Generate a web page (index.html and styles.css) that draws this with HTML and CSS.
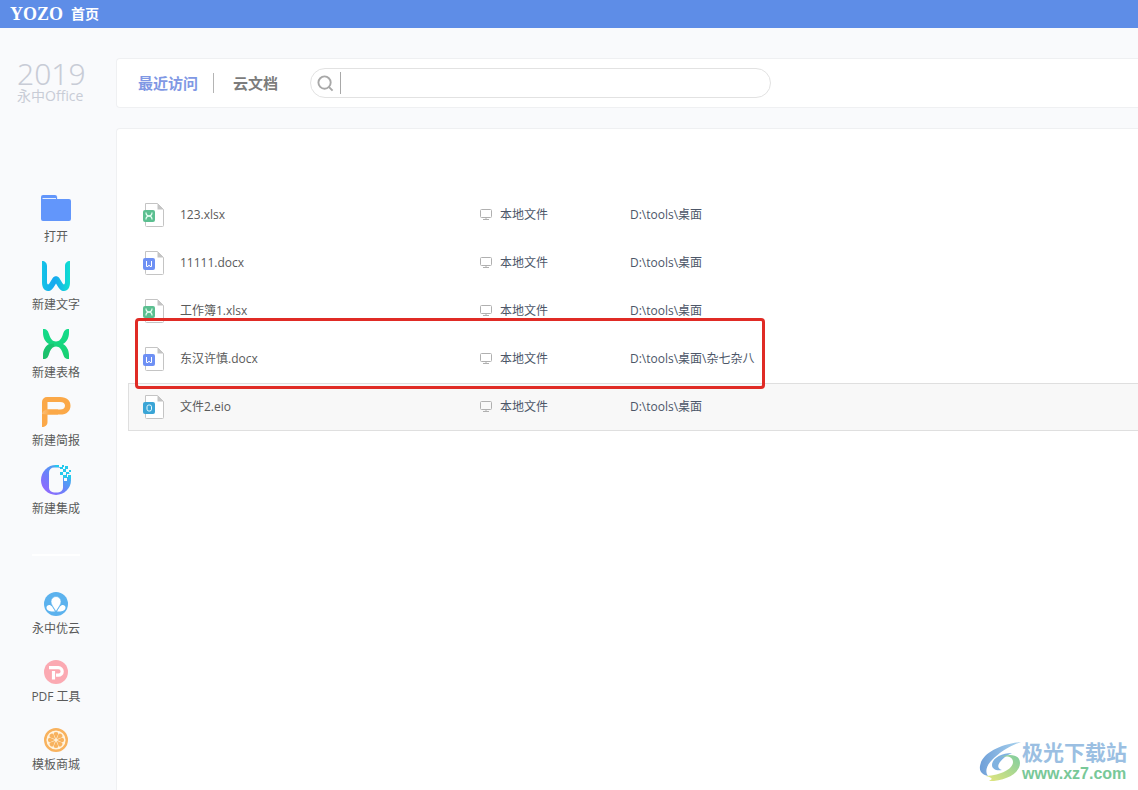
FILE: index.html
```
<!DOCTYPE html>
<html lang="zh-CN">
<head>
<meta charset="utf-8">
<meta name="viewport" content="width=device-width, initial-scale=1">
<title>YOZO 首页</title>
<link rel="stylesheet" href="styles.css">
</head>
<body>
<svg class="defs" aria-hidden="true">
  <defs>
    <linearGradient id="gw" x1="0" y1="0" x2="1" y2="0"><stop offset="0" stop-color="#14c4e6"/><stop offset=".45" stop-color="#18a8f0"/><stop offset="1" stop-color="#10e0d0"/></linearGradient>
    <linearGradient id="gx" x1="0" y1="0" x2="0" y2="1"><stop offset="0" stop-color="#14dc8c"/><stop offset="1" stop-color="#18d070"/></linearGradient>
    <linearGradient id="go" x1="0" y1="1" x2="1" y2="0"><stop offset="0" stop-color="#a060ff"/><stop offset=".45" stop-color="#6c80fa"/><stop offset="1" stop-color="#20d0e8"/></linearGradient>
    <linearGradient id="gp" x1="0" y1="0" x2="1" y2="0"><stop offset="0" stop-color="#fcc078"/><stop offset=".5" stop-color="#fba848"/></linearGradient>
    <linearGradient id="gs" x1="0" y1="0" x2="1" y2="0"><stop offset="0" stop-color="#6f9fd8"/><stop offset="1" stop-color="#a9d3ee"/></linearGradient>
    <linearGradient id="gg" x1="0" y1="1" x2="1" y2="0"><stop offset="0" stop-color="#e5e67c"/><stop offset="1" stop-color="#7fcda0"/></linearGradient>
    <symbol id="page" viewBox="0 0 22 24">
      <path d="M2.500.5H14.500l6 6V22.500a1 1 0 0 1-1 1h-16a1 1 0 0 1-1-1z" fill="#fff" stroke="#c4c4c4"/>
      <path d="M14.500.5V6.500h6z" fill="#c4c4c4"/>
    </symbol>
    <symbol id="file-x" viewBox="0 0 22 24">
      <use href="#page"/><rect y="7" width="12" height="12" rx="2" fill="#5bbf90"/>
      <path d="M3 9.500c0 4.500 6 4.500 6 0M3 16.500c0-4.500 6-4.500 6 0" fill="none" stroke="#e8fff4" stroke-width="1.200"/>
    </symbol>
    <symbol id="file-w" viewBox="0 0 22 24">
      <use href="#page"/><rect y="7" width="12" height="12" rx="2" fill="#6e90f4"/>
      <path d="M3.500 10v5.500h1.500l1-1.500 1 1.500h1.500V10" fill="none" stroke="#fff"/>
    </symbol>
    <symbol id="file-o" viewBox="0 0 22 24">
      <use href="#page"/><rect y="7" width="12" height="12" rx="2" fill="#3aa5d6"/>
      <rect x="4" y="10" width="4.500" height="6" rx="1.800" fill="none" stroke="#e8faff"/>
    </symbol>
    <symbol id="monitor" viewBox="0 0 12 12">
      <path d="M1.500.5h9a1 1 0 0 1 1 1v6a1 1 0 0 1-1 1h-9a1 1 0 0 1-1-1v-6a1 1 0 0 1 1-1zM6 8.500v2M3 10.500h6" fill="none" stroke="#b0b0b0"/>
    </symbol>
  </defs>
</svg>

<header class="titlebar">
  <span class="brand">YOZO</span>
  <span class="home">首页</span>
</header>

<div class="layout">
  <aside class="sidebar">
    <div class="product">
      <span class="year">2019</span>
      <span class="suite">永中Office</span>
    </div>
    <nav class="create">
      <button class="action" type="button">
        <svg class="icon" viewBox="0 0 36 36"><path d="M3 7a2 2 0 0 1 2-2h12a2 2 0 0 1 2 2v2h12a2 2 0 0 1 2 2v18a2 2 0 0 1-2 2H5a2 2 0 0 1-2-2z" fill="#6296fb"/><path d="M4.500 8.500h13.500M19.500 6.500v2.500" stroke="#e4eeff" fill="none"/></svg>
        <span>打开</span>
      </button>
      <button class="action" type="button">
        <svg class="icon" viewBox="0 0 36 36"><path d="M4 3c3 0 5 2 5 5v16c0 3 1.500 3 2.500 1.300l3.200-5.300c1.500-2.400 5.100-2.400 6.600 0l3.200 5.300C25.500 27 27 27 27 24V8c0-3 2-5 5-5v21.500c0 4.500-2 8.500-6 8.500-3 0-4.500-1.500-8-7.500-3.500 6-5 7.500-8 7.500-4 0-6-4-6-8.500z" fill="url(#gw)"/></svg>
        <span>新建文字</span>
      </button>
      <button class="action" type="button">
        <svg class="icon" viewBox="0 0 36 36"><path d="M5 3c4 0 5 2 6 5 1.500 4.800 3.500 7.500 7 7.500s5.500-2.700 7-7.500c1-3 2-5 6-5v4c0 5-2.500 9-6 11 3.500 2 6 6 6 11v4c-4 0-5-2-6-5-1.500-4.800-3.500-7.500-7-7.500s-5.500 2.700-7 7.500c-1 3-2 5-6 5v-4c0-5 2.500-9 6-11-3.500-2-6-6-6-11z" fill="url(#gx)"/><path d="M5 33v-4c0-4 2-8 5-10 2-1 4-1.500 6-1.500v3.500c-2.300.7-3.700 2.700-5 7-1 3-2 5-6 5z" fill="#20a860" opacity=".4"/></svg>
        <span>新建表格</span>
      </button>
      <button class="action" type="button">
        <svg class="icon" viewBox="0 0 36 36"><path d="M4 8a5 5 0 0 1 5-5h13c7 0 10.500 3.500 10.500 8.700S29 20.500 22 20.500H9.500V28c0 3.500-2.500 5-5.500 5z" fill="#fba848"/><path d="M9.500 8H22c3.500 0 5 1.500 5 3.800s-1.500 3.700-5 3.700H9.500z" fill="#f9fafc"/><path d="M4 20q1-4.500 6-4.500h10v5H9.500z" fill="url(#gp)"/></svg>
        <span>新建简报</span>
      </button>
      <button class="action" type="button">
        <svg class="icon" viewBox="0 0 36 36"><circle cx="18" cy="18" r="15" fill="url(#go)"/><rect x="11" y="5.500" width="14" height="25" rx="5" fill="#f9fafc"/><path d="M21 2h3v3h-3zM25 4h3v3h-3zM28 7h3v3h-3zM22 7h3v3h-3zM25 10h3v3h-3zM29 12h3v3h-3zM26 16h3v3h-3z" fill="#f9fafc"/><path d="M17 3h4v2h-4zM24 3h2v2h-2zM27 4h3v3h-3zM22 5h3v2h-3zM25 7h3v3h-3zM22 10h3v3h-3zM28 10h3v2h-3zM31 8h2v2h-2zM25 13h4v3h-4zM30 13h3v4h-3z" fill="#25c9ed"/></svg>
        <span>新建集成</span>
      </button>
    </nav>
    <hr class="divider">
    <nav class="services">
      <button class="action service" type="button">
        <svg class="icon" viewBox="0 0 24 24"><circle cx="12" cy="12" r="12" fill="#5cb2ee"/><path d="M11 19.500c-5 .5-8.500-1-8.500-4s4-3.500 5.500-1c1 1.500 2 3 3 5zM13 19.500c5 .5 8.500-1 8.500-4s-4-3.500-5.500-1c-1 1.500-2 3-3 5z" fill="#fff"/><path d="M12 19.500C9 14.500 7 12.500 7 9.500a5 5 0 0 1 10 0c0 3-2 5-5 10z" fill="#fff" stroke="#5cb2ee" stroke-width=".6"/></svg>
        <span>永中优云</span>
      </button>
      <button class="action service" type="button">
        <svg class="icon" viewBox="0 0 24 24"><circle cx="12" cy="12" r="12" fill="#fba9b2"/><path d="M5 7.700h9.500a3.700 3.700 0 0 1 0 7.400H12M9.500 11v8.500" fill="none" stroke="#fff" stroke-width="3.200"/></svg>
        <span>PDF 工具</span>
      </button>
      <button class="action service" type="button">
        <svg class="icon" viewBox="0 0 24 24"><circle cx="12" cy="12" r="10.800" fill="#fff3df" stroke="#f8b25e" stroke-width="2.400"/><g fill="#f8b25e"><path id="seg" d="M12 11 9.800 6.200C9.500 4.800 10.500 4 12 4s2.500.8 2.200 2.200z"/><use href="#seg" transform="rotate(45 12 12)"/><use href="#seg" transform="rotate(90 12 12)"/><use href="#seg" transform="rotate(135 12 12)"/><use href="#seg" transform="rotate(180 12 12)"/><use href="#seg" transform="rotate(225 12 12)"/><use href="#seg" transform="rotate(270 12 12)"/><use href="#seg" transform="rotate(315 12 12)"/></g></svg>
        <span>模板商城</span>
      </button>
    </nav>
  </aside>

  <main class="main">
    <div class="toolbar">
      <button class="tab active" type="button">最近访问</button>
      <button class="tab" type="button">云文档</button>
      <label class="search">
        <svg class="search-icon" viewBox="0 0 18 18"><circle cx="8" cy="8" r="6.500"/><path d="M12.500 12.500l4 4"/></svg>
        <input class="search-input" type="search" aria-label="搜索">
      </label>
    </div>

    <section class="panel">
      <table class="files">
        <tbody>
          <tr><td class="type"><svg class="file-icon"><use href="#file-x"/></svg></td><td class="name">123.xlsx</td><td class="place"><span class="source"><svg class="monitor"><use href="#monitor"/></svg>本地文件</span></td><td>D:\tools\桌面</td></tr>
          <tr><td class="type"><svg class="file-icon"><use href="#file-w"/></svg></td><td class="name">11111.docx</td><td class="place"><span class="source"><svg class="monitor"><use href="#monitor"/></svg>本地文件</span></td><td>D:\tools\桌面</td></tr>
          <tr><td class="type"><svg class="file-icon"><use href="#file-x"/></svg></td><td class="name">工作簿1.xlsx</td><td class="place"><span class="source"><svg class="monitor"><use href="#monitor"/></svg>本地文件</span></td><td>D:\tools\桌面</td></tr>
          <tr><td class="type"><svg class="file-icon"><use href="#file-w"/></svg></td><td class="name">东汉许慎.docx</td><td class="place"><span class="source"><svg class="monitor"><use href="#monitor"/></svg>本地文件</span></td><td>D:\tools\桌面\杂七杂八</td></tr>
          <tr class="selected"><td class="type"><svg class="file-icon"><use href="#file-o"/></svg></td><td class="name">文件2.eio</td><td class="place"><span class="source"><svg class="monitor"><use href="#monitor"/></svg>本地文件</span></td><td>D:\tools\桌面</td></tr>
        </tbody>
      </table>
      <div class="highlight"></div>
    </section>
  </main>
</div>

<div class="watermark">
  <svg class="swirl" viewBox="0 0 42 42"><path d="M42 1C22 3 3 12 1 25c-1 6 3 9 8 10-3-4-2-10 4-16C20 12 30 5 42 1z" fill="url(#gs)"/><path d="M33 12c-10 0-20 5-20 12 0 4 4 6 10 5-4-1-5-4-2-8 3-4 7-7 12-9z" fill="#7fb2e0"/><path d="M20 17c8-3 14-1 14 4 0 7-12 13-27 14 7 2 7 3 3 5 17 0 31-8 31-18 0-9-12-10-21-5z" fill="url(#gg)"/></svg>
  <div class="mark-text"><span class="mark-name">极光下载站</span><span class="mark-url">www.xz7.com</span></div>
</div>
</body>
</html>
```
FILE: styles.css
```
* { box-sizing: border-box; }

body {
  margin: 0;
  min-height: 100vh;
  display: flex;
  flex-direction: column;
  position: relative;
  background: #f9fafc;
  color: #5a5a5a;
  font: 12px/20px "Open Sans", "Noto Sans CJK SC", sans-serif;
}

button { font: inherit; color: inherit; border: 0; padding: 0; background: none; cursor: pointer; }

.defs { position: absolute; width: 0; height: 0; }

.titlebar {
  display: flex;
  align-items: center;
  gap: 8px;
  height: 28px;
  padding: 0 10px;
  background: #5e8de7;
  color: #fff;
}
.brand { font: bold 18px/28px "Liberation Serif", serif; }
.home { font-size: 14px; font-weight: bold; }

.layout { flex: 1; display: grid; grid-template-columns: 116px 1fr; }

.sidebar { display: flex; flex-direction: column; padding: 30px 0 14px; }
.product { display: flex; flex-direction: column; padding-left: 17px; color: #c8ccd6; }
.year { font: 30px/32px "Noto Sans", sans-serif; font-weight: 300; }
.suite { font-size: 14px; line-height: 12px; }

.create { display: flex; flex-direction: column; gap: 10px; margin-top: 88px; }
.action { display: flex; flex-direction: column; align-items: center; width: 112px; line-height: 22px; }
.icon { width: 36px; height: 36px; }
.divider { width: 48px; height: 2px; margin: 34px 0 36px 32px; border: 0; background: #fff; }
.services { display: flex; flex-direction: column; gap: 20px; }
.service { gap: 2px; }
.service .icon { width: 24px; height: 24px; }

.main { display: flex; flex-direction: column; gap: 20px; padding-top: 30px; min-width: 0; }
.toolbar {
  display: flex;
  align-items: center;
  height: 50px;
  padding-left: 21px;
  background: #fff;
  border: 1px solid #eff0f2;
  border-right: 0;
  border-radius: 4px 0 0 4px;
}
.tab { font-size: 15px; font-weight: bold; color: #7c7c7c; white-space: nowrap; }
.tab.active { color: #7f98e4; padding-right: 15px; margin-right: 19px; border-right: 1px solid #b4b4b4; }
.search {
  display: flex;
  align-items: center;
  flex: 0 1 461px;
  height: 30px;
  margin-left: 32px;
  padding-left: 6px;
  border: 1px solid #e2e2e2;
  border-radius: 15px;
}
.search-icon { width: 17px; height: 17px; fill: none; stroke: #a8a8a8; stroke-width: 2; }
.search-input {
  flex: 1;
  min-width: 0;
  height: 22px;
  margin: 0 14px 0 6px;
  padding: 0 6px;
  border: 0;
  border-left: 1px solid #a8a8a8;
  outline: 0;
  background: none;
  font: inherit;
  appearance: none;
}

.panel {
  flex: 1;
  position: relative;
  padding: 62px 0 0 11px;
  background: #fff;
  border: 1px solid #eff0f2;
  border-width: 1px 0 0 1px;
  border-radius: 4px 0 0 0;
}
.files { width: 100%; border-collapse: separate; border-spacing: 0; table-layout: fixed; }
.files td { height: 48px; padding: 0; white-space: nowrap; color: #4c5668; }
.files .type { width: 52px; padding-left: 15px; }
.files .name { width: 300px; color: #5a5a5a; }
.files .place { width: 150px; }
.source { display: flex; align-items: center; gap: 8px; }
.file-icon { display: block; width: 22px; height: 24px; }
.monitor { width: 12px; height: 12px; }
.selected td { background: #f8f8f8; border: 1px solid #dfdfdf; border-width: 1px 0; }
.selected .type { border-left-width: 1px; padding-left: 14px; }

.highlight {
  position: absolute;
  left: 18px;
  top: 189px;
  width: 630px;
  height: 71px;
  border: 3px solid #e02b25;
  border-radius: 4px;
}

.watermark { position: absolute; right: 11px; bottom: 6px; display: flex; align-items: center; gap: 1px; }
.swirl { width: 42px; height: 42px; }
.mark-text { display: flex; flex-direction: column; }
.mark-name { font-size: 21px; line-height: 24px; font-weight: bold; color: #9bbfe2; }
.mark-url { font: 16px/20px "Liberation Sans", sans-serif; font-weight: bold; color: #78c898; }
```
